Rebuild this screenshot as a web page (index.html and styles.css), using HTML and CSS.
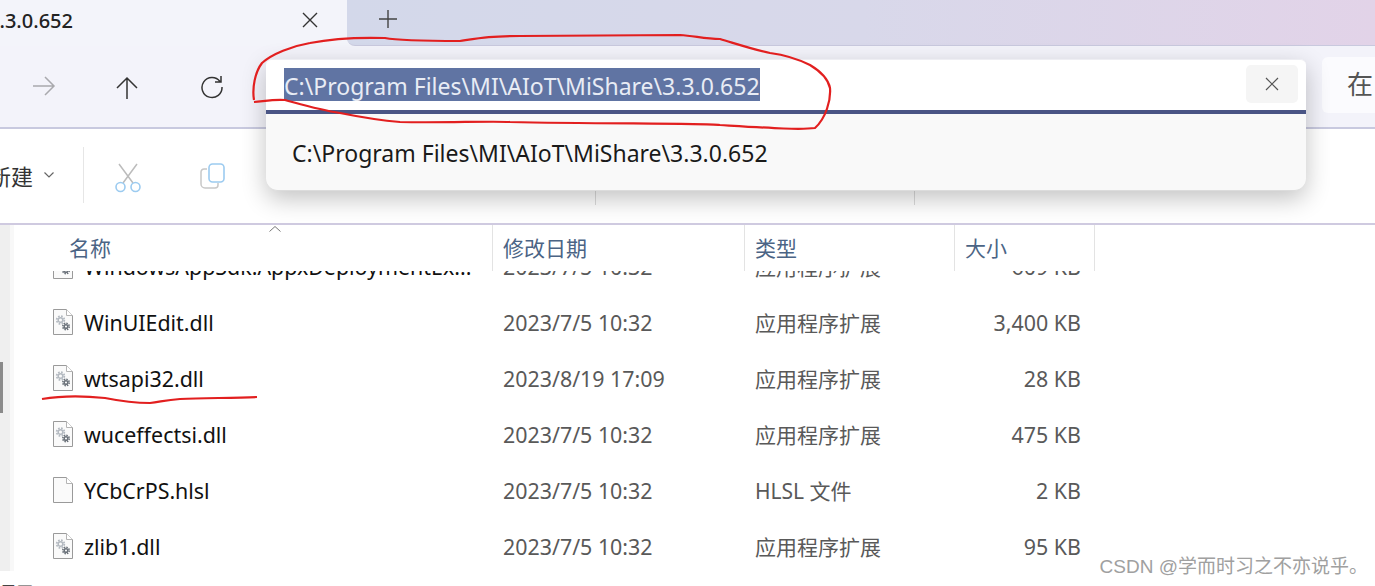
FILE: index.html
```html
<!DOCTYPE html>
<html lang="zh-CN">
<head>
    <meta charset="UTF-8">
    <title>3.3.0.652 - 文件资源管理器</title>
    <link rel="stylesheet" href="styles.css">
</head>
<body>
    <svg class="sprites" width="0" height="0">
        <symbol id="file-page" viewBox="0 0 20 26">
            <path d="M.5.5h13l6 6v19H.5z" fill="#fafafa" stroke="#9a9a9a"/>
            <path d="M13.500.5v6h6" fill="#fff" stroke="#b4b4b4"/>
        </symbol>
        <symbol id="file-dll" viewBox="0 0 20 26">
            <use href="#file-page" width="20" height="26"/>
            <circle cx="7.500" cy="11" r="3.800" fill="none" stroke="#b4bac1" stroke-width="1.800" stroke-dasharray="1.700 1.300"/>
            <circle cx="7.500" cy="11" r="2.300" fill="none" stroke="#b4bac1" stroke-width="1.500"/>
            <circle cx="13" cy="17.500" r="3.200" fill="none" stroke="#6b727a" stroke-width="1.600" stroke-dasharray="1.500 1"/>
            <circle cx="13" cy="17.500" r="1.800" fill="none" stroke="#6b727a" stroke-width="1.500"/>
        </symbol>
    </svg>

    <div class="tabstrip">
        <div class="tab">
            <span class="tab-title">3.3.0.652</span>
            <svg class="tab-close" width="16" height="16" viewBox="0 0 16 16"><path d="M1 1l14 14M15 1L1 15" stroke="#333" stroke-width="1.400"/></svg>
        </div>
        <div class="tab-rest">
            <svg class="tab-add" width="18" height="18" viewBox="0 0 18 18"><path d="M9 0v18M0 9h18" stroke="#444" stroke-width="1.400"/></svg>
        </div>
    </div>

    <div class="toolbar">
        <svg class="nav nav-forward" width="24" height="20" viewBox="0 0 24 20"><path d="M1 10h21M13 1l9 9-9 9" fill="none" stroke="#a9a9ad" stroke-width="1.500"/></svg>
        <svg class="nav nav-up" width="22" height="24" viewBox="0 0 22 24"><path d="M11 23V2M1 12L11 2l10 10" fill="none" stroke="#333" stroke-width="1.500"/></svg>
        <svg class="nav nav-refresh" width="24" height="24" viewBox="0 0 24 24"><path d="M20 6.500A10 10 0 1 0 22 12M21 1v6h-6" fill="none" stroke="#333" stroke-width="1.500"/></svg>
        <div class="searchbox">在</div>
    </div>

    <div class="commandbar">
        <span class="new-btn">新建</span>
        <svg class="new-caret" width="10" height="6" viewBox="0 0 10 6"><path d="M.5.500L5 5 9.500.500" fill="none" stroke="#666" stroke-width="1.200"/></svg>
        <span class="cmd-sep"></span>
        <svg class="cmd-cut" width="28" height="30" viewBox="0 0 28 30">
            <path d="M5 1l14 19M23 1L9 20" fill="none" stroke="#bcbcbc" stroke-width="1.500"/>
            <circle cx="6.500" cy="24" r="4.500" fill="none" stroke="#9ccbf0" stroke-width="1.600"/>
            <circle cx="21.500" cy="24" r="4.500" fill="none" stroke="#9ccbf0" stroke-width="1.600"/>
        </svg>
        <svg class="cmd-copy" width="26" height="26" viewBox="0 0 26 26">
            <path d="M7 6H4a3 3 0 0 0-3 3v12a4 4 0 0 0 4 4h10a3 3 0 0 0 3-3v-2" fill="none" stroke="#c8c8c8" stroke-width="1.500"/>
            <rect x="9" y="1" width="15" height="18" rx="3.500" fill="#fff" stroke="#9ccbf0" stroke-width="1.600"/>
        </svg>
        <span class="cmd-tick tick-a"></span>
        <span class="cmd-tick tick-b"></span>
    </div>

    <div class="content">
        <div class="rail"><span class="rail-thumb"></span></div>
        <div class="pane">
            <div class="columns">
                <div class="col col-name">名称</div>
                <div class="col col-date">修改日期</div>
                <div class="col col-type">类型</div>
                <div class="col col-size">大小</div>
                <svg class="sort-caret" width="12" height="6" viewBox="0 0 12 6"><path d="M.5 5.500L6 .5l5.500 5" fill="none" stroke="#777"/></svg>
            </div>
            <ul class="files">
                <li class="file">
                    <div class="file-name"><svg class="file-icon"><use href="#file-dll"/></svg>WindowsAppSdk.AppxDeploymentEx...</div>
                    <div class="file-date">2023/7/5 10:32</div>
                    <div class="file-type">应用程序扩展</div>
                    <div class="file-size">609 KB</div>
                </li>
                <li class="file">
                    <div class="file-name"><svg class="file-icon"><use href="#file-dll"/></svg>WinUIEdit.dll</div>
                    <div class="file-date">2023/7/5 10:32</div>
                    <div class="file-type">应用程序扩展</div>
                    <div class="file-size">3,400 KB</div>
                </li>
                <li class="file">
                    <div class="file-name"><svg class="file-icon"><use href="#file-dll"/></svg>wtsapi32.dll</div>
                    <div class="file-date">2023/8/19 17:09</div>
                    <div class="file-type">应用程序扩展</div>
                    <div class="file-size">28 KB</div>
                </li>
                <li class="file">
                    <div class="file-name"><svg class="file-icon"><use href="#file-dll"/></svg>wuceffectsi.dll</div>
                    <div class="file-date">2023/7/5 10:32</div>
                    <div class="file-type">应用程序扩展</div>
                    <div class="file-size">475 KB</div>
                </li>
                <li class="file">
                    <div class="file-name"><svg class="file-icon"><use href="#file-page"/></svg>YCbCrPS.hlsl</div>
                    <div class="file-date">2023/7/5 10:32</div>
                    <div class="file-type">HLSL 文件</div>
                    <div class="file-size">2 KB</div>
                </li>
                <li class="file">
                    <div class="file-name"><svg class="file-icon"><use href="#file-dll"/></svg>zlib1.dll</div>
                    <div class="file-date">2023/7/5 10:32</div>
                    <div class="file-type">应用程序扩展</div>
                    <div class="file-size">95 KB</div>
                </li>
            </ul>
        </div>
    </div>
    <div class="statusbar">项目</div>

    <!-- address box popup lies over the toolbar and command bar -->
    <div class="address">
        <div class="address-input">
            <span class="address-value">C:\Program Files\MI\AIoT\MiShare\3.3.0.652</span>
            <span class="address-clear">
                <svg width="14" height="14" viewBox="0 0 14 14"><path d="M1 1l12 12M13 1L1 13" stroke="#555" stroke-width="1.200"/></svg>
            </span>
        </div>
        <div class="address-suggest">C:\Program Files\MI\AIoT\MiShare\3.3.0.652</div>
    </div>

    <!-- hand drawn red marks -->
    <svg class="marks" width="1375" height="586" viewBox="0 0 1375 586">
        <path d="M254 100C252 88 255 72 262 63C272 54 292 46 310 43C330 39 350 37 385 38C400 41 430 41 460 41C480 38 490 36 520 36L680 35C695 36 705 39 720 39C740 45 755 50 770 53C785 55 800 60 810 65C820 71 828 78 830 88C831 100 826 118 815 128C800 130 770 128 720 125C700 123 600 124 510 122C490 121 440 123 400 122C375 120 355 116 340 113C320 110 300 104 285 100C275 99 265 101 254 102" fill="none" stroke="#e21f1f" stroke-width="2.200"/>
        <path d="M42 399C60 396 85 396 105 398C120 401 135 403 150 403C160 402 165 400 180 399C205 398 235 398 257 397" fill="none" stroke="#e21f1f" stroke-width="2.200"/>
    </svg>

    <div class="watermark">CSDN @学而时习之不亦说乎。</div>
</body>
</html>
```
FILE: styles.css
```css
* {
    box-sizing: border-box;
}
body {
    margin: 0;
    width: 1375px;
    height: 586px;
    overflow: hidden;
    position: relative;
    background: #fff;
    color: #1a1a1a;
    font-family: "Noto Sans", "Noto Sans CJK SC", sans-serif;
    font-size: 21.400px;
}
.sprites {
    position: absolute;
}

/* tabs */
.tabstrip {
    display: flex;
    height: 46px;
    background: #f3f4fa;
}
.tab {
    width: 347px;
    flex: none;
    display: flex;
    align-items: center;
    padding-bottom: 6px;
    overflow: hidden;
}
.tab-title {
    margin-left: -12px;
    font-size: 20px;
    font-weight: 500;
    color: #222;
}
.tab-close {
    margin-left: auto;
    margin-right: 29px;
}
.tab-rest {
    flex: 1;
    display: flex;
    align-items: center;
    padding: 0 0 8px 32px;
    background: linear-gradient(90deg, #d3d8ea, #d8d8ea 50%, #e2d3e8);
    border-bottom: 1px solid #c9c9de;
    border-bottom-left-radius: 8px;
}

/* navigation row */
.toolbar {
    height: 83px;
    display: flex;
    align-items: flex-start;
    background: #f3f3fa;
    border-bottom: 2px solid #c8c9df;
    position: relative;
}
.nav {
    flex: none;
    margin-top: 30px;
}
.nav-forward {
    margin-left: 32px;
}
.nav-up {
    margin-left: 60px;
}
.nav-refresh {
    margin-left: 62px;
    margin-top: 29px;
}
.searchbox {
    position: absolute;
    left: 1322px;
    top: 11px;
    width: 80px;
    height: 56px;
    padding: 10px 0 0 25px;
    background: #fbfbfe;
    border-radius: 6px;
    color: #555;
    font-size: 26px;
    line-height: 34px;
}

/* command row */
.commandbar {
    height: 96px;
    display: flex;
    align-items: center;
    position: relative;
    border-bottom: 2px solid #cfcae0;
    padding-bottom: 2px;
}
.new-btn {
    margin-left: -11px;
    font-size: 22px;
    color: #333;
}
.new-caret {
    margin-left: 11px;
}
.cmd-sep {
    width: 1px;
    height: 56px;
    margin-left: 29px;
    background: #e6e6e6;
}
.cmd-cut {
    margin-left: 30px;
    margin-top: 6px;
}
.cmd-copy {
    margin-left: 58px;
    margin-top: 1px;
}
.cmd-tick {
    position: absolute;
    top: 62px;
    width: 1px;
    height: 14px;
    background: #dcdcdc;
}
.tick-a {
    left: 595px;
}
.tick-b {
    left: 914px;
}

/* file list */
.content {
    display: flex;
    height: 346px;
}
.rail {
    width: 14px;
    flex: none;
    background: linear-gradient(90deg, #efefef 10px, #f8f8f8 10px);
    position: relative;
}
.rail-thumb {
    position: absolute;
    left: 0;
    top: 137px;
    width: 3px;
    height: 51px;
    background: #8a8a8a;
}
.pane {
    flex: 1;
    overflow: hidden;
}
.columns {
    display: flex;
    height: 46px;
    position: relative;
    background: #fff;
    z-index: 1;
    font-size: 21px;
    color: #4b6485;
}
.col {
    padding-top: 8px;
    border-right: 1px solid #e3e3e3;
    line-height: 30px;
}
.col-name {
    width: 479px;
    padding-left: 55px;
}
.col-date {
    width: 252px;
    padding-left: 10px;
}
.col-type {
    width: 210px;
    padding-left: 10px;
}
.col-size {
    width: 140px;
    padding-left: 10px;
}
.sort-caret {
    position: absolute;
    left: 255px;
    top: 1px;
}
.files {
    list-style: none;
    margin: -33px 0 0;
    padding: 0;
}
.file {
    display: flex;
    align-items: center;
    height: 56px;
    color: #595959;
}
.file-name {
    width: 479px;
    padding-left: 39px;
    display: flex;
    align-items: center;
    color: #111;
    white-space: nowrap;
}
.file-icon {
    width: 20px;
    height: 26px;
    margin-right: 11px;
    flex: none;
}
.file-date {
    width: 252px;
    padding-left: 10px;
}
.file-type {
    width: 210px;
    padding-left: 10px;
    font-size: 21px;
}
.file-size {
    width: 126px;
    text-align: right;
}
.statusbar {
    margin-top: 11px;
    margin-left: -5px;
    color: #444;
    font-size: 20px;
    line-height: 26px;
}

/* address popup */
.address {
    position: absolute;
    left: 266px;
    top: 59px;
    width: 1040px;
    height: 132px;
    border-radius: 6px 6px 12px 12px;
    background: #f9f9f9;
    border-bottom: 1px solid #dcdcdc;
    box-shadow: 0 8px 24px rgba(0,0,0,0.24);
    font-size: 23px;
}
.address-input {
    height: 55px;
    display: flex;
    align-items: center;
    padding: 2px 8px 3px 18px;
    background: #fff;
    border-top: 1px solid #eeeef3;
    border-bottom: 4px solid #4a5585;
    border-radius: 6px 6px 0 0;
}
.address-value {
    padding-top: 3px;
    background: #6074a3;
    color: #e8ecf5;
    line-height: 30px;
    white-space: nowrap;
}
.address-clear {
    margin-left: auto;
    width: 52px;
    height: 38px;
    display: flex;
    align-items: center;
    justify-content: center;
    background: #f5f5f5;
    border-radius: 5px;
    margin-bottom: 1px;
}
.address-suggest {
    padding: 22px 0 0 26px;
    line-height: 34px;
    color: #1a1a1a;
    white-space: nowrap;
}

.marks {
    position: absolute;
    left: 0;
    top: 0;
    pointer-events: none;
}
.watermark {
    position: absolute;
    right: 7px;
    bottom: 7px;
    font-family: "Liberation Sans", "Noto Sans CJK SC", sans-serif;
    font-size: 19px;
    line-height: 24px;
    color: #a0a0a0;
}
```
